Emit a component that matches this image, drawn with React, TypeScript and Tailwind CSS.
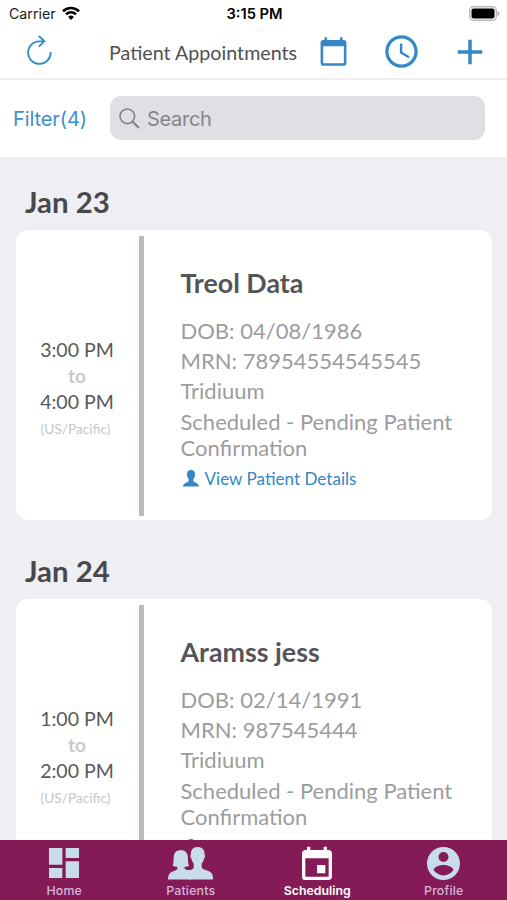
import type { ReactNode } from 'react';
import { MdAccessTime, MdAdd, MdCalendarToday, MdDashboard, MdEvent } from 'react-icons/md';

interface Appointment {
  date: string;
  name: string;
  dob: string;
  mrn: string;
  start: string;
  end: string;
}

const appointments: Appointment[] = [
  { date: 'Jan 23', name: 'Treol Data', dob: '04/08/1986', mrn: '78954554545545', start: '3:00 PM', end: '4:00 PM' },
  { date: 'Jan 24', name: 'Aramss jess', dob: '02/14/1991', mrn: '987545444', start: '1:00 PM', end: '2:00 PM' },
];

function PersonIcon() {
  return (
    <svg viewBox="0 0 16 17" className="h-[17px] w-4" fill="currentColor">
      <path d="M8 0C5.300 0 3.900 1.600 4.100 4.100c-.5.300-.4 1.800.2 2.200.2 1.300.7 2.100 1.300 2.800v2.200c-.5 1.400-5.400 1.200-5.600 5.200h16c-.2-4-5.100-3.800-5.600-5.200V9.100c.6-.7 1.100-1.500 1.300-2.800.6-.4.700-1.900.2-2.200C12.100 1.600 10.700 0 8 0z" />
    </svg>
  );
}

function PatientsIcon() {
  return (
    <svg viewBox="0 0 45 33" className="h-[33px] w-[45px]" fill="currentColor">
      <path d="M29.700 0c-4.600 0-7.100 2.900-6.800 7.800-.8.400-.6 3.200.5 3.800.4 2.200 1.200 3.800 2.300 4.900v4.100c-.5 1.400-2.200 2.200-4.200 2.900L20 32.400h25c0-2.500-.3-4.300-1.100-5.800-2.200-3.100-9.300-3.600-10.200-6v-4.100c1.200-1.100 2-2.700 2.400-4.900 1.100-.6 1.300-3.400.5-3.800.3-4.900-2.300-7.800-6.900-7.800z" />
      <path d="M12.800 3.200c-4.700 0-7 2.700-7.100 7.300-.1 3.600 0 6-1.200 8 1.200 1 2.600 1.300 4.800 1.300v2.300c-.9 1.800-5.600 2.300-7.500 4.300C.4 28.200 0 30 0 32.400h22.500l.2-9.400c-2.600.1-5.800-.3-6.100-1.200v-2c2 0 3.300-.3 4.500-1.300-1.200-2-1.100-4.400-1.200-8-.1-4.600-2.400-7.300-7.100-7.300z" />
    </svg>
  );
}

function ProfileIcon() {
  return (
    <svg viewBox="2 2 20 20" className="size-[33px]" fill="currentColor">
      <path d="M12 2C6.480 2 2 6.480 2 12s4.480 10 10 10 10-4.480 10-10S17.520 2 12 2zm0 3c1.660 0 3 1.340 3 3s-1.340 3-3 3-3-1.340-3-3 1.340-3 3-3zm0 14.200c-2.500 0-4.710-1.280-6-3.220.03-1.990 4-3.080 6-3.080 1.990 0 5.970 1.090 6 3.080-1.290 1.940-3.500 3.220-6 3.220z" />
    </svg>
  );
}

function StatusBar() {
  return (
    <div className="grid h-7 grid-cols-3 items-center pr-[7px] pl-[9px] font-['Inter',sans-serif] text-[14.200px] text-[#202020]">
      <div className="flex items-center gap-[6px]">
        <span className="pb-px">Carrier</span>
        <svg viewBox="0 0 18 14" className="mb-[2px] h-[14px] w-[18px]" fill="none" stroke="#000" strokeWidth="2.600">
          <path d="M1 5.300a11.300 11.300 0 0 1 16 0" />
          <path d="M4 8.400a7 7 0 0 1 10 0" />
          <path d="M9 14 6.100 11a4.100 4.100 0 0 1 5.800 0z" fill="#000" stroke="none" />
        </svg>
      </div>
      <span className="text-center text-[14.700px] font-semibold text-black">3:15 PM</span>
      <svg viewBox="0 0 31 15" className="mb-[2px] h-[15px] w-[31px] justify-self-end">
        <rect x=".7" y=".7" width="26.600" height="13.600" rx="3.800" fill="#fff" stroke="#b9b9b9" strokeWidth="1.400" />
        <rect x="2.500" y="2.500" width="23" height="10" rx="2" fill="#000" />
        <path d="M28.500 5v5c1.700-.7 2-1.600 2-2.500s-.3-1.800-2-2.500z" fill="#b0b0b0" />
      </svg>
    </div>
  );
}

function Header() {
  return (
    <header className="flex h-[52px] items-center border-b-2 border-[#efeff1] pb-[3px] text-[#3388c5]">
      <svg viewBox="0 0 26 30" className="mb-[3px] ml-[27px] h-[30px] w-[26px]" fill="none" stroke="currentColor" strokeWidth="1.800">
        <path d="M23.700 17A11.300 11.300 0 1 1 12.400 6.300h4.800" />
        <path d="m11.800 1 5.600 5.300-5.600 5.400" />
      </svg>
      <h1 className="ml-14 w-[189px] pt-0.5 text-[19.700px] whitespace-nowrap text-[#505052]">Patient Appointments</h1>
      <MdCalendarToday className="ml-5 size-[31px]" />
      <MdAccessTime className="ml-[33px] size-[39px]" />
      <MdAdd className="ml-7 size-[42px]" />
    </header>
  );
}

function SearchRow() {
  return (
    <div className="flex h-[77px] items-center pb-px pl-[13px] font-['Inter',sans-serif]">
      <span className="w-[97px] pt-0.5 text-[20px] tracking-[-0.1px] text-[#3d8fcb]">Filter(4)</span>
      <div className="flex h-11 w-[375px] items-center gap-[7px] rounded-[11px] bg-[#e0dfe5] pl-[9px] text-[20px] text-[#85858a]">
        <svg viewBox="0 0 21 21" className="size-[21px]" fill="none" stroke="currentColor" strokeWidth="1.700">
          <circle cx="8.300" cy="8.300" r="7.300" />
          <path d="m13.500 13.500 6.500 6.500" strokeWidth="2.200" />
        </svg>
        <span className="pt-0.5 tracking-[-0.3px]">Search</span>
      </div>
    </div>
  );
}

function AppointmentCard({ appointment }: { appointment: Appointment }) {
  const { date, name, dob, mrn, start, end } = appointment;

  return (
    <section className="h-[369px] shrink-0">
      <h2 className="flex h-[73px] items-center pt-[18px] pl-[25px] text-[29.400px] font-bold text-[#48484a]">{date}</h2>
      <div className="mr-[15px] ml-4 flex h-[290px] rounded-[12px] bg-white">
        <div className="flex w-[123px] flex-col items-center pt-[107px] text-[19.500px] leading-[26px] text-[#58585a]">
          <span className="mr-px">{start}</span>
          <span className="mr-px text-[19px] font-bold text-[#cacacc]">to</span>
          <span className="mr-px">{end}</span>
          <span className="mr-1 text-[13.700px] leading-7 text-[#c6c6c8]">(US/Pacific)</span>
        </div>
        <div className="my-[6px] mb-1 w-[5px] bg-[#b7bbba]" />
        <div className="ml-[36.500px] flex w-[290px] flex-col text-[22px] leading-[26px] text-[#9c9c9e]">
          <h3 className="mt-[37px] mb-[19px] text-[26.800px] leading-8 font-bold text-[#555557]">{name}</h3>
          <p className="mb-1">DOB: {dob}</p>
          <p className="mb-1">MRN: {mrn}</p>
          <p className="mb-[5px]">Tridiuum</p>
          <p>Scheduled - Pending Patient Confirmation</p>
          <div className="mt-1 flex items-center gap-[6px] pl-0.5 text-[17.100px] leading-[24px] text-[#3388c5]">
            <PersonIcon />
            <span className="pt-0.5">View Patient Details</span>
          </div>
        </div>
      </div>
    </section>
  );
}

function Tab({ label, icon, active = false }: { label: string; icon: ReactNode; active?: boolean }) {
  return (
    <div className={`flex flex-1 flex-col items-center ${active ? 'font-semibold text-white' : 'font-medium text-[#c8dcec]'}`}>
      <div className="flex h-[43px] items-center justify-center pt-[3px]">{icon}</div>
      <span className={`text-[12.300px] leading-4 ${active ? 'text-white' : 'tracking-[0.2px] text-[#d4b7d8]'}`}>{label}</span>
    </div>
  );
}

export default function App() {
  return (
    <div className="flex h-[900px] w-[507px] flex-col overflow-hidden bg-white font-['Lato',sans-serif]">
      <StatusBar />
      <Header />
      <SearchRow />
      <main className="flex min-h-0 flex-1 flex-col overflow-hidden bg-[#efeef3]">
        {appointments.map((appointment) => (
          <AppointmentCard key={appointment.mrn} appointment={appointment} />
        ))}
      </main>
      <nav className="flex h-[60px] shrink-0 bg-[#841b56] pl-px font-['Inter',sans-serif]">
        <Tab label="Home" icon={<MdDashboard className="size-10" />} />
        <Tab label="Patients" icon={<PatientsIcon />} />
        <Tab label="Scheduling" icon={<MdEvent className="mt-[3px] size-10" />} active />
        <Tab label="Profile" icon={<ProfileIcon />} />
      </nav>
    </div>
  );
}
